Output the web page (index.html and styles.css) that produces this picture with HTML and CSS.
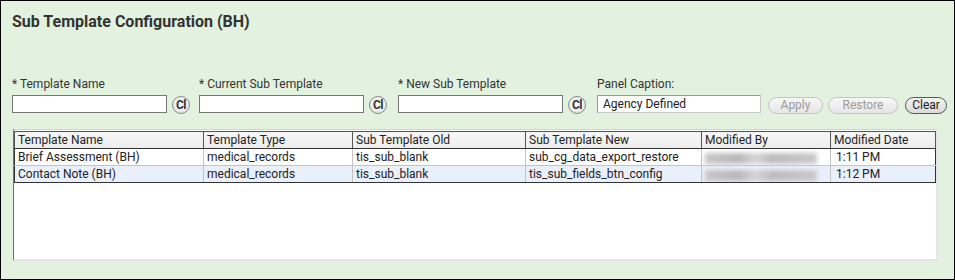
FILE: index.html
```html
<!DOCTYPE html>
<html>
<head>
<meta charset="utf-8">
<link rel="stylesheet" href="styles.css">
</head>
<body>
<div class="page">
  <h1 class="title">Sub Template Configuration (BH)</h1>
  <div class="form">
    <div class="group g1">
      <label class="lbl">* Template Name</label>
      <div class="ctl"><input class="inp w154" type="text"><span class="cl">Cl</span></div>
    </div>
    <div class="group g2">
      <label class="lbl">* Current Sub Template</label>
      <div class="ctl"><input class="inp w164" type="text"><span class="cl">Cl</span></div>
    </div>
    <div class="group g3">
      <label class="lbl">* New Sub Template</label>
      <div class="ctl"><input class="inp w164" type="text"><span class="cl">Cl</span></div>
    </div>
    <div class="group g4">
      <label class="lbl">Panel Caption:</label>
      <div class="ctl">
        <input class="inp cap" type="text" value="Agency Defined">
        <button class="btn dis apply">Apply</button>
        <button class="btn dis restore">Restore</button>
        <button class="btn clear">Clear</button>
      </div>
    </div>
  </div>
  <div class="gridbox">
    <table class="grid">
      <colgroup>
        <col class="c1"><col class="c2"><col class="c3"><col class="c4"><col class="c5"><col class="c6">
      </colgroup>
      <thead>
        <tr><th>Template Name</th><th>Template Type</th><th>Sub Template Old</th><th>Sub Template New</th><th>Modified By</th><th>Modified Date</th></tr>
      </thead>
      <tbody>
        <tr><td>Brief Assessment (BH)</td><td>medical_records</td><td>tis_sub_blank</td><td>sub_cg_data_export_restore</td><td><span class="blur b1"></span></td><td class="date">1:11 PM</td></tr>
        <tr class="alt"><td>Contact Note (BH)</td><td>medical_records</td><td>tis_sub_blank</td><td>tis_sub_fields_btn_config</td><td><span class="blur b2"></span></td><td class="date">1:12 PM</td></tr>
      </tbody>
    </table>
  </div>
</div>
</body>
</html>
```
FILE: styles.css
```css
html, body { margin: 0; padding: 0; }
body { font-family: Roboto, "Liberation Sans", Arial, sans-serif; color: #222; }
.page {
  width: 953px; height: 278px;
  border: 1px solid #000;
  background: #e2f2df;
  overflow: hidden;
}
.title {
  margin: 0; padding: 11px 0 0 11px;
  font-size: 16px; font-weight: bold; color: #333;
  line-height: 19px;
}
.form { display: flex; margin-top: 46px; padding-left: 11px; }
.group { display: flex; flex-direction: column; }
.g1 { width: 187px; }
.g2 { width: 199px; }
.g3 { width: 199px; }
.lbl { font-size: 12px; line-height: 14px; height: 18px; color: #333; }
.ctl { display: flex; align-items: center; height: 18px; }
.inp {
  box-sizing: border-box; height: 18px; margin: 0;
  border: 1px solid #767676; background: #fff;
  font-family: Roboto, "Liberation Sans", Arial, sans-serif; font-size: 12px;
  padding: 0 4px; color: #222;
}
.w154 { width: 155px; }
.w164 { width: 165px; }
.cap { width: 164px; border-color: #9a9a9a #c8c8c8 #c8c8c8 #9a9a9a; padding-left: 5px; }
.cl {
  box-sizing: border-box;
  width: 18px; height: 18px; margin-left: 5px; margin-top: 1px;
  border: 1px solid #8a8a8a; border-radius: 50%;
  background: radial-gradient(circle at 50% 40%, #ffffff 0, #f0f0f0 50%, #d4d4d4 100%);
  font-size: 12px; font-weight: bold; color: #333; line-height: 16px;
  text-align: center; letter-spacing: -0.5px;
}
.btn {
  box-sizing: border-box; height: 17px; margin: 2px 0 0 0; padding: 0;
  border-radius: 9px;
  font-family: Roboto, "Liberation Sans", Arial, sans-serif; font-size: 12px; line-height: 15px;
  background: linear-gradient(#f7f7f7, #e6e6e6);
}
.dis { border: 1px solid #c4c4c4; color: #9a9a9a; }
.apply { width: 55px; margin-left: 7px; }
.restore { width: 70px; margin-left: 5px; }
.clear { width: 42px; margin-left: 7px; border: 1px solid #555; color: #222; background: linear-gradient(#f4f4f4, #dadada); }
.gridbox {
  margin: 16px 0 0 12px;
  width: 922px; height: 129px;
  background: #fff;
  border-style: solid; border-width: 1px 2px 2px 1px;
  border-color: #d4d4d4 #e8e8e8 #e4e4e4 #707070;
}
.grid {
  margin-top: 1px;
  width: 921px;
  border-collapse: collapse;
  font-size: 12px; color: #222;
  table-layout: fixed;
}
.c1 { width: 189px; } .c2 { width: 149px; } .c3 { width: 173px; }
.c4 { width: 176px; } .c5 { width: 129px; } .c6 { width: 105px; }
.grid th, .grid td {
  height: 16px; padding: 0 0 0 3px; text-align: left;
  white-space: nowrap; overflow: hidden; line-height: 16px;
}
.grid td.date { padding-left: 5px; }
.grid th {
  font-weight: normal; background: linear-gradient(#f7f7f7, #ececec);
  border: 1px solid #555; border-bottom: 1px solid #333;
}
.grid td { border: 1px solid #c4c4c4; }
.grid tbody tr td:first-child { border-left: 1px solid #333; }
.grid tbody tr td:last-child { border-right: 1px solid #333; }
.grid tbody tr:last-child td { border-bottom: 1px solid #333; }
.grid tr.alt td { background: #eaf0fb; }
.blur {
  display: block; height: 11px; margin-top: 3px;
  background: linear-gradient(90deg, #c8c8c8 0, #b8b8b8 30%, #d6d6d6 45%, #bcbcbc 60%, #c9c9c9 100%);
  filter: blur(2px);
}
.b1 { width: 112px; }
.b2 { width: 112px; }
```
